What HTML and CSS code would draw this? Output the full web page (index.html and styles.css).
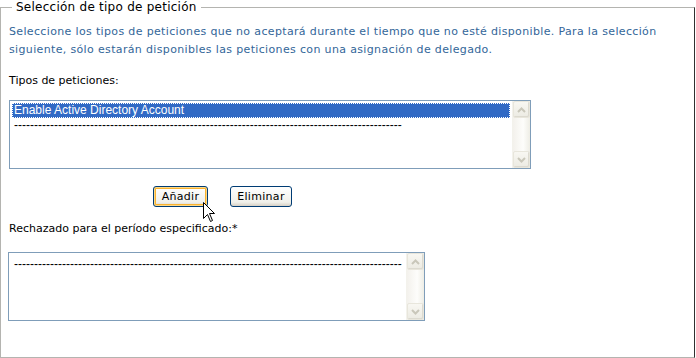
FILE: index.html
```html
<!DOCTYPE html>
<html>
<head>
    <title>Selección de tipo de petición</title>
    <link rel="stylesheet" href="styles.css">
</head>
<body>
    <fieldset class="request-box">
        <legend>Selección de tipo de petición</legend>

        <p class="intro">Seleccione los tipos de peticiones que no aceptará durante el tiempo que no esté disponible. Para la selección siguiente, sólo estarán disponibles las peticiones con una asignación de delegado.</p>

        <p class="label">Tipos de peticiones:</p>
        <div class="listbox list-types">
            <div class="items">
                <div class="item selected">Enable Active Directory Account</div>
                <div class="item">-------------------------------------------------------------------------------------------------</div>
            </div>
            <div class="scrollbar">
                <span class="arrow up"><svg width="9" height="6" viewBox="0 0 9 6"><path d="M1 5 L4.5 1.5 L8 5" fill="none" stroke="#c9c7ba" stroke-width="2"/></svg></span>
                <span class="arrow down"><svg width="9" height="6" viewBox="0 0 9 6"><path d="M1 1 L4.5 4.5 L8 1" fill="none" stroke="#c9c7ba" stroke-width="2"/></svg></span>
            </div>
        </div>

        <div class="actions">
            <button class="btn btn-add">Añadir</button>
            <button class="btn btn-remove">Eliminar</button>
            <svg class="cursor" width="13" height="21" viewBox="0 0 13 21"><path d="M0.5 0.5 L0.5 16.5 L4.5 12.5 L7.5 19.5 L9.5 18.5 L6.5 11.5 L11.5 11.5 Z" fill="#fff" stroke="#000" stroke-width="1"/></svg>
        </div>

        <p class="label label-rejected">Rechazado para el período especificado:*</p>
        <div class="listbox list-rejected">
            <div class="items">
                <div class="item">-------------------------------------------------------------------------------------------------</div>
            </div>
            <div class="scrollbar">
                <span class="arrow up"><svg width="9" height="6" viewBox="0 0 9 6"><path d="M1 5 L4.5 1.5 L8 5" fill="none" stroke="#c9c7ba" stroke-width="2"/></svg></span>
                <span class="arrow down"><svg width="9" height="6" viewBox="0 0 9 6"><path d="M1 1 L4.5 4.5 L8 1" fill="none" stroke="#c9c7ba" stroke-width="2"/></svg></span>
            </div>
        </div>
    </fieldset>
</body>
</html>
```

FILE: styles.css
```css
body { margin: 0; background: #fff; font-family: "DejaVu Sans", Verdana, sans-serif; font-size: 11px; color: #000; }
.request-box { box-sizing: border-box; width: 695px; height: 358px; margin: 0; padding: 0 8px; border: 1px solid #b4b4b0; border-right-color: #303030; }
.request-box legend { margin-left: 3px; padding: 0 4px; font-size: 12px; letter-spacing: 0.25px; line-height: 14px; }
.intro { margin: 9px 0 0; line-height: 18px; color: #336699; letter-spacing: 0.35px; }
.label { margin: 13px 0 0; line-height: 18px; }
.listbox { display: flex; box-sizing: border-box; height: 69px; margin-top: 10px; border: 1px solid #7f9db9; background: #fff; }
.list-types { width: 522px; }
.label-rejected { margin-top: 13px; }
.list-rejected { width: 417px; margin-top: 14px; margin-left: -1px; }
.items { flex: 1; padding: 2px 2px 0; font-family: "Liberation Sans", Arial, sans-serif; font-size: 12px; overflow: hidden; }
.item { height: 14px; line-height: 14px; padding: 0 2px; white-space: nowrap; overflow: hidden; color: #000; }
.list-rejected .items { padding: 4px 3px 0; }
.item.selected { background: #316ac5; color: #fff; outline: 1px dotted #fff; outline-offset: -1px; border: 1px dotted #1a3f7a; height: 13px; line-height: 13px; padding: 0 1px; }
.scrollbar { display: flex; flex-direction: column; justify-content: space-between; width: 17px; background: linear-gradient(to right, #f3f1ec, #fdfdfb 60%, #eeede5); border-left: 1px solid #f3f2ec; }
.arrow { display: flex; align-items: center; justify-content: center; box-sizing: border-box; height: 17px; border: 1px solid #e8e6dc; border-radius: 2px; background: linear-gradient(#f8f7f2, #ecebe3); box-shadow: inset -1px -1px 0 #dcdad0; }
.actions { position: relative; display: flex; gap: 22px; margin: 17px 0 0 144px; }
.btn { box-sizing: border-box; height: 21px; padding: 0; border: 1px solid #003c74; border-radius: 3px; background: linear-gradient(#ffffff, #f0f0ea 80%, #d6d0c5); font-family: "DejaVu Sans", Verdana, sans-serif; font-size: 11px; letter-spacing: 0.3px; color: #000; }
.btn-add { width: 55px; box-shadow: inset 0 0 0 1px #fdd889, inset 0 0 0 2px #f8b330; }
.btn-remove { width: 62px; }
.cursor { position: absolute; left: 50px; top: 16px; }
```
